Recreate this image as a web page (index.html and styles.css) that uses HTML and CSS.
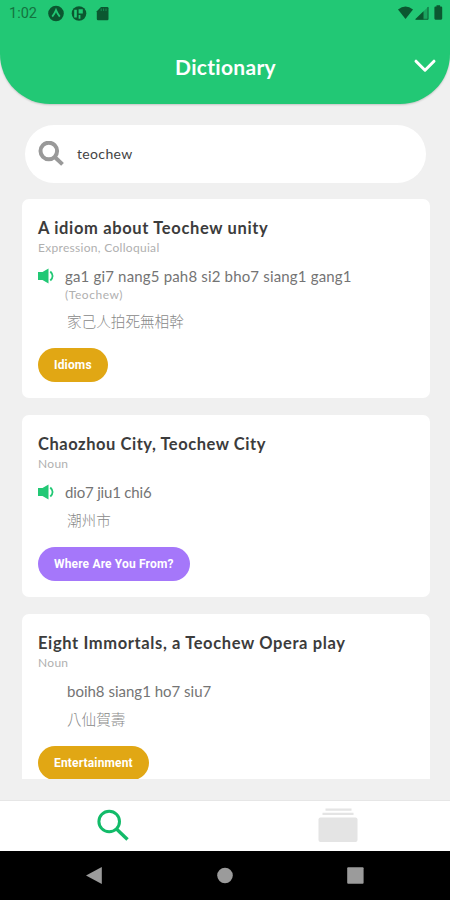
FILE: index.html
```
<!DOCTYPE html>
<html lang="en">
<head>
<meta charset="utf-8">
<title>Dictionary</title>
<link rel="stylesheet" href="styles.css">
</head>
<body>
<div class="app">
  <header class="header">
    <div class="status">
      <span class="clock">1:02</span>
      <svg class="status-left" width="62" height="18" viewBox="0 0 62 18">
        <circle cx="8" cy="8.500" r="7.800"/>
        <path class="cut" d="M4.200 11.700Q6.500 9 8 5.200q1.500 3.800 3.800 6.500"/>
        <circle cx="31" cy="8.500" r="7.300"/>
        <path class="hole" d="M26.200 4.800h2.600v7.800h-2.600zM30.600 4.300h4.200v4.200h-4.200zM30.600 9.900h1.800v3.800h-1.800z"/>
        <path d="M53 2h6.300q1.200 0 1.200 1.200v10.800q0 1.200-1.200 1.200H50q-1.200 0-1.200-1.200V6.200z"/>
        <path class="slits" d="M53.200 3.500v2.500M55.600 3.500v2.500M58 3.500v2.500"/>
      </svg>
      <svg class="status-right" width="48" height="18" viewBox="0 0 48 18">
        <path d="M1 4.400Q8.500-1.600 16 4.400L8.500 14z"/>
        <path d="M18 14.500 31.500 1.500v13z" opacity=".3"/>
        <path d="M18 14.500 26.500 6.200v8.300z"/>
        <path d="M31 2v12.300H19" class="edge"/>
        <path d="M39.500 1.500v-1.300h3.600v1.300h1q1.100 0 1.100 1.100v11q0 1.100-1.100 1.100h-5.600q-1.100 0-1.100-1.100v-11q0-1.100 1.100-1.100z"/>
      </svg>
    </div>
    <div class="heading">
      <h1>Dictionary</h1>
      <svg class="chevron" width="24" height="16" viewBox="0 0 24 16"><path d="M3 3.200 12 12.200l9-9"/></svg>
    </div>
  </header>

  <label class="search">
    <svg width="26" height="26" viewBox="0 0 26 26"><circle cx="10.800" cy="10" r="8.300"/><path d="m17 16.200 7.500 7.200"/></svg>
    <span>teochew</span>
  </label>

  <main class="list">
    <article class="card">
      <h2 class="t1">A idiom about Teochew unity</h2>
      <p class="kind">Expression, Colloquial</p>
      <div class="say">
        <svg class="speaker" width="17" height="16" viewBox="0 0 17 16"><path d="M0 4h4.500L10.500.5v15l-6-3.500H0z"/><path class="wave" d="M12.300 3.500q4.600 4.500 0 9"/></svg>
        <span class="s1">ga1 gi7 nang5 pah8 si2 bho7 siang1 gang1</span>
      </div>
      <p class="note">(Teochew)</p>
      <p class="hanzi" lang="zh-Hant">家己人拍死無相幹</p>
      <span class="pill gold">Idioms</span>
    </article>
    <article class="card">
      <h2 class="t2">Chaozhou City, Teochew City</h2>
      <p class="kind">Noun</p>
      <div class="say">
        <svg class="speaker" width="17" height="16" viewBox="0 0 17 16"><path d="M0 4h4.500L10.500.5v15l-6-3.500H0z"/><path class="wave" d="M12.300 3.500q4.600 4.500 0 9"/></svg>
        <span class="s2">dio7 jiu1 chi6</span>
      </div>
      <p class="hanzi" lang="zh-Hant">潮州市</p>
      <span class="pill violet">Where Are You From?</span>
    </article>
    <article class="card">
      <h2 class="t3">Eight Immortals, a Teochew Opera play</h2>
      <p class="kind">Noun</p>
      <div class="say silent"><span class="s3">boih8 siang1 ho7 siu7</span></div>
      <p class="hanzi" lang="zh-Hant">八仙賀壽</p>
      <span class="pill gold">Entertainment</span>
    </article>
  </main>

  <nav class="tabs">
    <div><svg width="34" height="34" viewBox="0 0 34 34"><g fill="none" stroke="#12bb69"><circle cx="13.200" cy="12.500" r="10.300" stroke-width="3"/><path d="m20.500 20 11 10.500" stroke-width="3.400"/></g></svg></div>
    <div><svg width="40" height="36" viewBox="0 0 40 36" fill="#e4e4e4"><path d="M7.500.5h26v2.200h-26zM4.500 4.700h31v2.400h-31z"/><rect x=".5" y="9.500" width="39" height="24.500" rx="2"/></svg></div>
  </nav>
  <footer class="system">
    <div><svg width="18" height="18" viewBox="0 0 18 18"><path d="M0 8.500 15.800 0v17z"/></svg></div>
    <div><svg width="18" height="18" viewBox="0 0 18 18"><circle cx="9" cy="8.500" r="7.800"/></svg></div>
    <div><svg width="18" height="18" viewBox="0 0 18 18"><rect x="1.200" y=".3" width="16.400" height="16.400" rx="1"/></svg></div>
  </footer>
</div>
</body>
</html>
```
FILE: styles.css
```
* { box-sizing: border-box; }
body, h1, h2, p { margin: 0; }
body {
  background: #f0f0f0;
  font-family: Lato, "Noto Sans CJK TC", sans-serif;
  font-variant-ligatures: none;
}
svg { display: block; flex: none; }
.app {
  width: 450px;
  height: 900px;
  display: flex;
  flex-direction: column;
  overflow: hidden;
}
.header {
  height: 104px;
  flex: none;
  background: #22c875;
  border-radius: 0 0 50px 50px;
  box-shadow: 0 1px 2px rgba(0, 0, 0, .18);
}
.status {
  height: 27px;
  padding: 0 5px 0 9px;
  display: flex;
  align-items: center;
  fill: #0b5730;
}
.clock {
  width: 39px;
  font: 14.500px Roboto, sans-serif;
  color: #14733f;
}
.status-right { margin-left: auto; }
.cut { fill: none; stroke: #22c875; stroke-width: 1.800; }
.hole { fill: #22c875; }
.slits { stroke: #22c875; stroke-width: .8; opacity: .6; }
.edge { fill: none; stroke: #0b5730; stroke-width: .8; }
.heading {
  height: 77px;
  display: grid;
  grid-template-columns: 1fr auto 1fr;
  align-items: center;
  padding: 2px 13px 0 14px;
}
h1 {
  grid-column: 2;
  font-size: 21px;
  font-weight: 700;
  line-height: 76px;
  letter-spacing: .3px;
  color: #fff;
}
.chevron { justify-self: end; margin-top: -2px; }
.chevron path { fill: none; stroke: #fff; stroke-width: 3; stroke-linecap: round; stroke-linejoin: round; }
.search {
  flex: none;
  height: 58px;
  margin: 20.500px 24px 0 25px;
  padding-left: 13px;
  display: flex;
  align-items: center;
  gap: 13px;
  border-radius: 29px;
  background: #fff;
  color: #444;
  font-size: 14px;
  letter-spacing: .35px;
}
.search svg { fill: none; stroke: #999; stroke-width: 4; }
.list {
  flex: none;
  height: 580.500px;
  margin: 16px 20.500px 0 22px;
  display: flex;
  flex-direction: column;
  gap: 16.500px;
  overflow: hidden;
}
.card {
  flex: none;
  padding: 17px 16px 16.500px;
  border-radius: 7px;
  background: #fff;
}
h2 {
  font-size: 16.500px;
  line-height: 24px;
  color: #3c3c3c;
  white-space: nowrap;
}
.t1 { letter-spacing: .65px; }
.t2 { letter-spacing: .54px; }
.t3 { letter-spacing: .62px; }
.kind, .note {
  font-size: 12px;
  line-height: 16px;
  letter-spacing: .3px;
  color: #b0b0b0;
}
.say {
  height: 22px;
  margin-top: 9.500px;
  display: flex;
  align-items: center;
  gap: 10px;
  font-size: 15px;
  color: #747474;
  white-space: nowrap;
}
.s1 { letter-spacing: .17px; }
.s2 { letter-spacing: -.18px; }
.speaker { fill: #22c875; }
.wave { fill: none; stroke: #22c875; stroke-width: 1.800; }
.silent { padding-left: 29px; }
.note { padding-left: 27px; letter-spacing: .55px; }
.hanzi {
  margin-top: 6.500px;
  padding-left: 29px;
  font: 14.600px/20px "Noto Sans CJK TC", sans-serif;
  font-weight: 300;
  color: #888;
}
.note + .hanzi { margin-top: 7.500px; }
.pill {
  display: block;
  width: fit-content;
  height: 34px;
  margin-top: 17px;
  padding: 0 16px;
  border-radius: 17px;
  font: 700 12px/34px Roboto, sans-serif;
  letter-spacing: .16px;
  color: #fff;
}
.gold { background: #e1a714; }
.violet { background: #a577fa; }
.tabs {
  flex: none;
  height: 51.500px;
  margin-top: 20.500px;
  display: grid;
  grid-template-columns: 1fr 1fr;
  background: #fff;
  border-top: 1px solid #e6e6e6;
}
.tabs div, .system div {
  display: flex;
  align-items: center;
  justify-content: center;
}
.system {
  flex: 1;
  display: grid;
  grid-template-columns: repeat(3, 130px);
  justify-content: center;
  background: #000;
  fill: #9b9b9b;
}
```
